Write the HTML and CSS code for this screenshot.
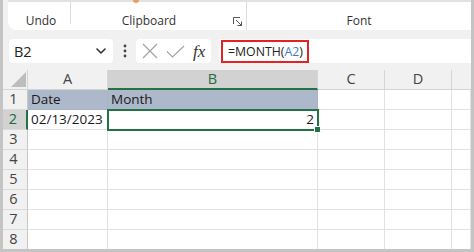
FILE: index.html
```html
<!DOCTYPE html>
<html>
<head>
<meta charset="utf-8">
<link rel="stylesheet" href="styles.css">
</head>
<body>
<div class="app">
  <div class="ribbon">
    <div class="grp grp-undo"><span class="glabel">Undo</span></div>
    <div class="sep sep-short"></div>
    <div class="grp grp-clip">
      <span class="glabel clip-label">Clipboard</span>
      <svg class="launcher" width="10" height="10" viewBox="0 0 10 10">
        <path d="M0.5 7 V0.5 H7" fill="none" stroke="#555" stroke-width="1"/>
        <path d="M3 3 L8.5 8.5 M4.5 8.5 H8.5 V4.5" fill="none" stroke="#555" stroke-width="1"/>
      </svg>
      <span class="orange"></span>
    </div>
    <div class="sep sep-long"></div>
    <div class="grp grp-font"><span class="glabel">Font</span></div>
  </div>

  <div class="fbar">
    <div class="namebox">
      <span class="nb-text">B2</span>
      <svg class="chev" width="10" height="6" viewBox="0 0 10 6">
        <path d="M1 1 L5 5 L9 1" fill="none" stroke="#333" stroke-width="1.6" stroke-linecap="round" stroke-linejoin="round"/>
      </svg>
    </div>
    <div class="dots">
      <svg width="4" height="14" viewBox="0 0 4 14">
        <circle cx="2" cy="2" r="1.4" fill="#444"/>
        <circle cx="2" cy="7" r="1.4" fill="#444"/>
        <circle cx="2" cy="12" r="1.4" fill="#444"/>
      </svg>
    </div>
    <div class="fxbox">
      <svg class="ico-x" width="16" height="16" viewBox="0 0 16 16">
        <path d="M1 1 L15 15 M15 1 L1 15" stroke="#a3a3a3" stroke-width="1.2" fill="none"/>
      </svg>
      <svg class="ico-check" width="19" height="13" viewBox="0 0 19 13">
        <path d="M1 6.5 L6.5 12 L18 1" stroke="#a3a3a3" stroke-width="1.2" fill="none"/>
      </svg>
      <span class="fx">fx</span>
    </div>
    <div class="finput">
      <span class="formula">=MONTH(<span class="ref">A2</span>)</span>
    </div>
  </div>

  <div class="sheet">
    <div class="corner"><svg width="16" height="16" viewBox="0 0 16 16"><path d="M16 0 L16 16 L0 16 Z" fill="#bdbdbd"/></svg></div>
    <div class="ch">A</div>
    <div class="ch ch-sel">B</div>
    <div class="ch">C</div>
    <div class="ch">D</div>
    <div class="ch ch-last"></div>

    <div class="rh">1</div>
    <div class="c fill">Date</div>
    <div class="c fill">Month</div>
    <div class="c"></div><div class="c"></div><div class="c"></div>

    <div class="rh rh-sel">2</div>
    <div class="c">02/13/2023</div>
    <div class="c active">2</div>
    <div class="c"></div><div class="c"></div><div class="c"></div>

    <div class="rh">3</div>
    <div class="c"></div><div class="c"></div><div class="c"></div><div class="c"></div><div class="c"></div>
    <div class="rh">4</div>
    <div class="c"></div><div class="c"></div><div class="c"></div><div class="c"></div><div class="c"></div>
    <div class="rh">5</div>
    <div class="c"></div><div class="c"></div><div class="c"></div><div class="c"></div><div class="c"></div>
    <div class="rh">6</div>
    <div class="c"></div><div class="c"></div><div class="c"></div><div class="c"></div><div class="c"></div>
    <div class="rh">7</div>
    <div class="c"></div><div class="c"></div><div class="c"></div><div class="c"></div><div class="c"></div>
    <div class="rh">8</div>
    <div class="c"></div><div class="c"></div><div class="c"></div><div class="c"></div><div class="c"></div>
  </div>
</div>
</body>
</html>
```

FILE: styles.css
```css
html, body {
  margin: 0;
  padding: 0;
  background: #fff;
}
.app {
  width: 474px;
  height: 252px;
  box-sizing: border-box;
  border-left: 3px solid #c4c4c4;
  border-right: 3px solid #c4c4c4;
  border-bottom: 3px solid #c4c4c4;
  background: #f1f1f1;
  overflow: hidden;
  font-family: "Open Sans", "Noto Sans", sans-serif;
  color: #222;
}

/* Ribbon */
.ribbon {
  margin-left: 5px;
  height: 30px;
  box-sizing: border-box;
  border-top: 2px solid #e2e2e2;
  background: #fff;
  border-bottom-left-radius: 8px;
  display: flex;
  align-items: flex-start;
}
.grp {
  height: 28px;
  display: flex;
  align-items: flex-start;
  box-sizing: border-box;
  padding-top: 11px;
  position: relative;
}
.glabel {
  font-size: 12px;
  line-height: 16px;
  color: #333;
}
.grp-undo {
  width: 62px;
  justify-content: center;
  padding-left: 4px;
}
.sep {
  width: 1px;
  background: #dcdcdc;
}
.sep-short { height: 22px; }
.sep-long { height: 28px; }
.grp-clip {
  width: 175px;
}
.clip-label {
  flex: 1;
  text-align: center;
  padding-right: 6px;
}
.launcher {
  margin-top: 4px;
  margin-right: 3px;
}
.orange {
  position: absolute;
  left: 62px;
  top: -2px;
  width: 6px;
  height: 3px;
  border-radius: 0 0 3px 3px;
  background: #e8a060;
}
.grp-font {
  flex: 1;
  justify-content: center;
}

/* Formula bar */
.fbar {
  margin-top: 9px;
  height: 24px;
  display: flex;
  align-items: stretch;
}
.namebox {
  margin-left: 6px;
  width: 104px;
  background: #fff;
  border-radius: 4px;
  display: flex;
  align-items: center;
  justify-content: space-between;
  padding: 0 7px 0 5px;
  box-sizing: border-box;
}
.nb-text {
  font-size: 14.5px;
  color: #222;
}
.dots {
  width: 23px;
  display: flex;
  align-items: center;
  justify-content: center;
}
.fxbox {
  width: 75px;
  background: #fff;
  border-radius: 4px;
  display: flex;
  align-items: center;
  box-sizing: border-box;
  padding-left: 6px;
}
.ico-x { margin-right: 8px; }
.ico-check { margin-right: 8px; margin-top: 1px; }
.fx {
  font-family: "Liberation Serif", "DejaVu Serif", serif;
  font-style: italic;
  font-size: 17px;
  color: #333;
  line-height: 1;
}
.finput {
  flex: 1;
  margin-left: 8px;
  background: #fff;
  display: flex;
  align-items: stretch;
  padding: 1px 0 0 2px;
}
.formula {
  border: 2px solid #e2231f;
  font-size: 12.3px;
  line-height: 19px;
  padding: 0 4px 0 5px;
  color: #222;
}
.ref { color: #3a7ec4; }

/* Sheet */
.sheet {
  margin-top: 7px;
  display: grid;
  grid-template-columns: 25px 80px 210px 67px 67px 1fr;
  grid-template-rows: repeat(9, 20px);
  background: #fff;
}
.corner {
  background: #f1f1f1;
  border-right: 1px solid #d4d4d4;
  border-bottom: 1px solid #d4d4d4;
  display: flex;
  align-items: flex-end;
  justify-content: flex-end;
  padding: 0 1px 2px 0;
}
.corner svg { width: 15px; height: 15px; }
.ch {
  background: #f1f1f1;
  border-right: 1px solid #d6d6d6;
  border-bottom: 1px solid #d4d4d4;
  font-size: 14.5px;
  color: #444;
  display: flex;
  align-items: center;
  justify-content: center;
  line-height: 1;
}
.ch-sel {
  background: #d2d2d2;
  color: #1e6b41;
  border-bottom: 2px solid #217346;
}
.ch-last { border-right: none; }
.rh {
  background: #f1f1f1;
  border-right: 1px solid #c8c8c8;
  border-bottom: 1px solid #dadada;
  font-size: 14.5px;
  color: #444;
  display: flex;
  align-items: center;
  justify-content: center;
  line-height: 1;
  padding-right: 3px;
}
.rh-sel {
  background: #d2d2d2;
  color: #1e6b41;
  border-right: 2px solid #217346;
}
.c {
  border-right: 1px solid #e2e2e2;
  border-bottom: 1px solid #e2e2e2;
  font-size: 13.5px;
  line-height: 19px;
  padding-left: 3px;
  color: #1a1a1a;
  white-space: nowrap;
  overflow: hidden;
}
.fill {
  background: #adb9ca;
  border-color: #a8b4c5;
}
.active {
  position: relative;
  overflow: visible;
  text-align: right;
  padding-right: 3px;
  outline: 2px solid #217346;
  outline-offset: -1px;
  z-index: 2;
}
.active::after {
  content: "";
  position: absolute;
  right: -4px;
  bottom: -4px;
  width: 5px;
  height: 5px;
  background: #217346;
  border: 1px solid #fff;
}
```
